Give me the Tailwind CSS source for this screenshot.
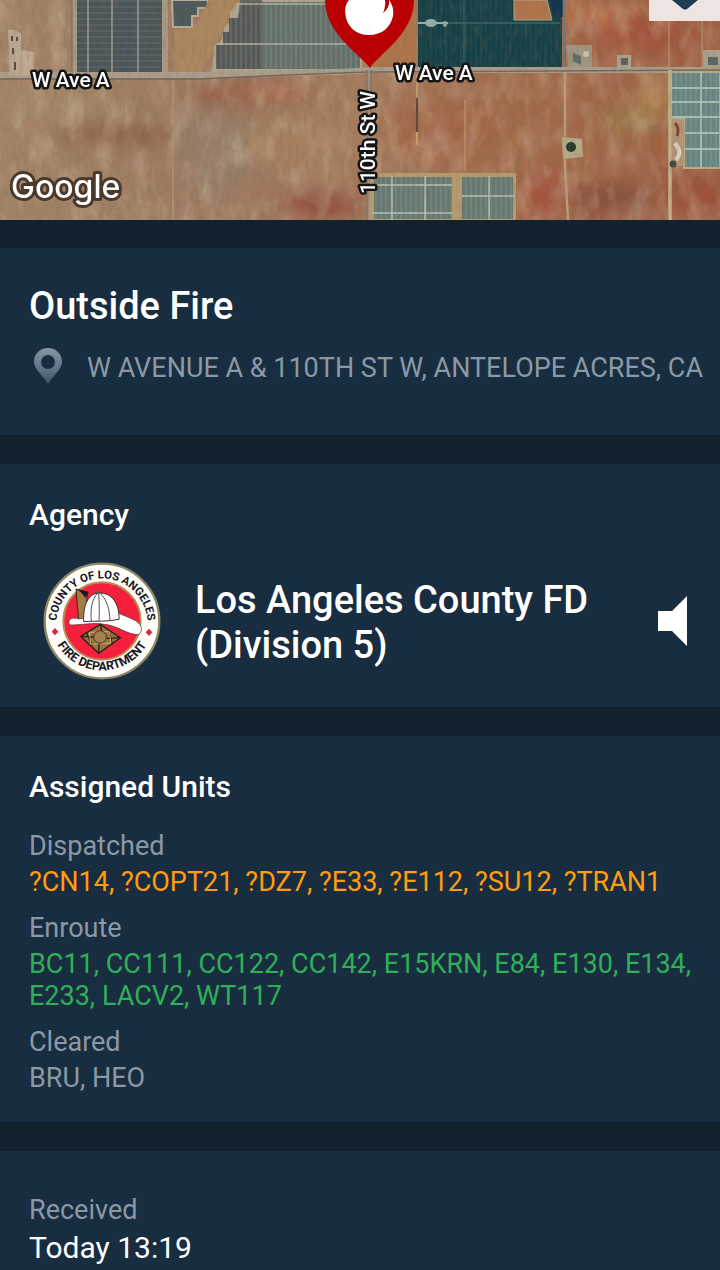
<!DOCTYPE html>
<html lang="en">
<head>
<meta charset="utf-8">
<meta name="viewport" content="width=device-width, initial-scale=1">
<title>Outside Fire</title>
<script src="https://cdn.jsdelivr.net/npm/@tailwindcss/browser@4"></script>
</head>
<body class="min-h-screen bg-[#182d3f] font-['Roboto',sans-serif] text-white">
<main class="flex flex-col">
  <div class="relative overflow-hidden">
    <svg class="block h-[220px] w-full" viewBox="0 0 720 220" preserveAspectRatio="xMidYMin slice" role="img" aria-label="Satellite map">
      <defs>
        <linearGradient id="soil" x1="0" x2="1" y1="0" y2="0">
          <stop offset="0" stop-color="#a18467"/><stop offset=".3" stop-color="#9c7a60"/>
          <stop offset=".5" stop-color="#a47a5b"/><stop offset=".7" stop-color="#a16c49"/><stop offset="1" stop-color="#9f6042"/>
        </linearGradient>
        <filter id="soft" x="-30%" y="-30%" width="160%" height="160%"><feGaussianBlur stdDeviation="9"/></filter>
        <filter id="edge"><feGaussianBlur stdDeviation=".7"/></filter>
        <filter id="light" x="0" y="0" width="100%" height="100%">
          <feTurbulence type="fractalNoise" baseFrequency=".06 .03" numOctaves="4" seed="4"/>
          <feColorMatrix values="0 0 0 0 .78  0 0 0 0 .69  0 0 0 0 .50  1.8 0 0 0 -.8"/>
        </filter>
        <filter id="dark" x="0" y="0" width="100%" height="100%">
          <feTurbulence type="fractalNoise" baseFrequency=".04 .04" numOctaves="4" seed="11"/>
          <feColorMatrix values="0 0 0 0 .46  0 0 0 0 .25  0 0 0 0 .18  0 1.8 0 0 -.75"/>
        </filter>
        <filter id="fine" x="0" y="0" width="100%" height="100%">
          <feTurbulence type="fractalNoise" baseFrequency=".25 .08" numOctaves="2" seed="7"/>
          <feColorMatrix values="0 0 0 0 .2  0 0 0 0 .14  0 0 0 0 .1  0 1.6 0 0 -.7"/>
        </filter>
        <pattern id="rowsH" width="80" height="6" patternUnits="userSpaceOnUse"><path d="M0 1H80" stroke="#8b9391" stroke-width="1" opacity=".35"/></pattern>
        <pattern id="rowsV" width="5" height="80" patternUnits="userSpaceOnUse"><path d="M1 0V80" stroke="#b4c0b0" stroke-width="1" opacity=".3"/></pattern>
      </defs>
      <rect width="720" height="220" fill="url(#soil)"/>
      <g filter="url(#soft)">
        <ellipse cx="115" cy="135" rx="60" ry="9" fill="#85533c" opacity=".8"/>
        <ellipse cx="225" cy="95" rx="35" ry="14" fill="#93543b" opacity=".65"/>
        <ellipse cx="50" cy="105" rx="60" ry="16" fill="#a58a6b" opacity=".7"/>
        <ellipse cx="215" cy="150" rx="35" ry="45" fill="#93806a" opacity=".8"/>
        <ellipse cx="275" cy="90" rx="35" ry="9" fill="#a9573c" opacity=".6"/>
        <ellipse cx="320" cy="205" rx="42" ry="13" fill="#8d4539" opacity=".8"/>
        <ellipse cx="300" cy="145" rx="55" ry="25" fill="#a8835f" opacity=".7"/>
        <ellipse cx="440" cy="130" rx="60" ry="30" fill="#a45b3d" opacity=".5"/>
        <ellipse cx="640" cy="35" rx="60" ry="18" fill="#a44c35" opacity=".8"/>
        <ellipse cx="590" cy="15" rx="40" ry="10" fill="#bd744b" opacity=".8"/>
        <ellipse cx="630" cy="120" rx="30" ry="14" fill="#998049" opacity=".7"/>
        <ellipse cx="655" cy="95" rx="14" ry="16" fill="#c09b58" opacity=".7"/>
        <ellipse cx="545" cy="195" rx="22" ry="25" fill="#a54c36" opacity=".7"/>
        <ellipse cx="610" cy="200" rx="42" ry="15" fill="#7c473c" opacity=".7"/>
        <ellipse cx="695" cy="195" rx="28" ry="20" fill="#9b4935" opacity=".7"/>
      </g>
      <rect width="720" height="220" filter="url(#light)" opacity=".4"/>
      <rect width="720" height="220" filter="url(#dark)" opacity=".5"/>
      <g filter="url(#edge)">
        <path d="M72 0H168V74H72Z" fill="#a69a84"/>
        <path d="M77 0H162V72H77Z" fill="#4c5459"/>
        <path d="M77 0H162V72H77Z" fill="url(#rowsH)"/>
        <path d="M88 0V72M112 0V72M138 0V72" stroke="#aaa897" stroke-width="1.3" fill="none"/>
        <path d="M72 0V72" stroke="#73675b"/>
        <path d="M172 0H208V8H198V16H192V27H173Z" fill="#4e5a5d" stroke="#b9ae98" stroke-width="2"/>
        <path d="M209 0H240L202 72H174V30L194 27Z" fill="#ab8760"/>
        <path d="M241 0H362V72H212L214 46L222 40L224 28L230 22V12Z" fill="#b0a58e"/>
        <path d="M243 2H360V69H216V45H223V32H229V18H238Z" fill="#64716a"/>
        <path d="M240 0H262V69H216V45H223V32H229V18H238Z" fill="#4d5050" opacity=".7"/>
        <path d="M243 2H360V69H216V45H223V32H229V18H238Z" fill="url(#rowsV)"/>
        <path d="M236 4H360M217 44H360" stroke="#aeb3a1" stroke-width="1.5" fill="none"/>
        <path d="M382 0H416V70H368Z" fill="#ad7449"/>
        <path d="M418 0H562V68H418Z" fill="#143f45"/>
        <path d="M418 0H562V68H418Z" fill="url(#rowsV)" opacity=".3"/>
        <path d="M418 23H560M464 0V67" stroke="#3d6665" stroke-width="1.3" fill="none"/>
        <path d="M418 23H448" stroke="#9ab4a9" stroke-width="2"/><ellipse cx="431" cy="23" rx="6" ry="4" fill="#91aea6"/><ellipse cx="445" cy="24" rx="2" ry="3" fill="#91aea6"/>
        <path d="M514 0H547L552 20H514Z" fill="#b1754c" stroke="#b8a58b" stroke-width="1"/>
        <path d="M550 0H563V17H554Z" fill="#16364d"/>
        <path d="M564 0V68" stroke="#777" stroke-width="2.5"/>
        <path d="M566 45H592V68H568Z" fill="#a09580"/><path d="M573 53l8 3v9l-8-4z" fill="#5f6c67"/><circle cx="586" cy="54" r="3" fill="#c7c1ac"/>
        <path d="M617 55H631V68H617Z" fill="#aaa290"/><path d="M621 58H628V65H621Z" fill="#625e54"/>
        <path d="M703 50H720V67H703Z" fill="#aaa18b"/><path d="M708 57H718V65H708Z" fill="#5c6660"/>
        <path d="M669 20V68M702 20V68" stroke="#b28863" stroke-width="1.5"/>
        <path d="M0 75H200L340 72L370 70H720" stroke="#aa9e8b" stroke-width="6" fill="none"/>
        <path d="M0 79H200Q300 74 370 72L720 70" stroke="#75685d" stroke-width="1.500" fill="none"/>
        <path d="M369 70V220" stroke="#9d9081" stroke-width="5"/><path d="M367 70V220M371 70V220" stroke="#766757" stroke-width="1"/>
        <path d="M173 80V220" stroke="#b18e6b" stroke-width="2"/><path d="M266 78V175" stroke="#9a8163" opacity=".5"/>
        <path d="M417 75V145" stroke="#c29b69" stroke-width="2"/><path d="M417 98V132" stroke="#604a39" stroke-width="2"/>
        <path d="M465 100V170" stroke="#be9160" stroke-width="1.5"/>
        <path d="M565 72V165L568 220" stroke="#bc9d78" stroke-width="2.5" fill="none"/>
        <path d="M670 70V220" stroke="#c3b08b" stroke-width="3.5"/>
        <path d="M370 173H516V220H370Z" fill="#b79b6d"/>
        <path d="M374 177H452V219H374ZM462 177H513V219H462Z" fill="#657a73"/>
        <path d="M374 177H452V219H374ZM462 177H513V219H462Z" fill="url(#rowsV)"/>
        <path d="M392 176V220M425 176V220M489 176V220M372 213H452M462 196H515M374 185H452" stroke="#b7c2ad" stroke-width="1.500" fill="none"/>
        <path d="M671 72H720V168H684V118H671Z" fill="#688683" stroke="#b8ac84" stroke-width="2"/>
        <path d="M671 72H720V168H684V118H671Z" fill="url(#rowsV)"/>
        <path d="M671 88H720M671 102H720M671 117H720M685 133H720M685 149H720M701 72V167" stroke="#a6c0b6" stroke-width="1.8" fill="none"/>
        <path d="M562 137L582 139L583 157L563 159Z" fill="#b6ab88"/><circle cx="571" cy="147" r="5" fill="#213b27"/>
        <path d="M672 119H684V166H672Z" fill="#b39576"/><path d="M675 123q5 5 2 13" stroke="#8b3e31" stroke-width="3" fill="none"/>
        <path d="M675 143q8 9 1 17" stroke="#ded5c6" stroke-width="4" fill="none"/><circle cx="673" cy="164" r="3.5" fill="#404841"/>
        <path d="M8 30Q15 28 21 34V76H10Z" fill="#baa790"/><path d="M21 50L34 52V76H21Z" fill="#c1aa94"/>
        <path d="M12 36v5M17 37v4M13 48v6M15 62v8" stroke="#554b40" stroke-width="2"/>
      </g>
      <rect width="720" height="220" filter="url(#fine)" opacity=".35"/>
      <path d="M370 68C360 54 325 34 325 0V-40H414V0C414 34 379 54 370 68Z" fill="#b90005"/>
      <path d="M349 0C344 6 345 12 346 18C349 29 358 35 369 35C382 35 391 27 393 16C394 9 392 4 389 0Z" fill="#fff"/>
      <path d="M385 0H389Q390 8 383 13Q386 6 385 0Z" fill="#b90005"/>
      <g font-family="Roboto, sans-serif" font-weight="500" font-size="21" fill="#fff" stroke="#151515" stroke-width="5" stroke-linejoin="round" paint-order="stroke">
        <text x="32" y="87">W Ave A</text>
        <text x="395" y="80">W Ave A</text>
        <text transform="translate(375 194) rotate(-90)">110th St W</text>
      </g>
      <text x="11" y="198" font-family="Inter, sans-serif" font-weight="500" font-size="32" fill="#fff" stroke="#4b392c" stroke-width="6" stroke-linejoin="round" paint-order="stroke">Google</text>
    </svg>
    <button type="button" aria-label="Map options" class="absolute top-0 right-0 flex h-[21px] w-[71px] justify-center bg-[#eee5e3]">
      <svg class="h-[10px] w-[26px]" viewBox="0 0 26 10" aria-hidden="true"><path d="M0 0H26L15 9Q13 10 11 9Z" fill="#203b52"/></svg>
    </button>
  </div>

  <div class="flex flex-col gap-[29px] bg-[#12212e] pt-7">
    <section class="bg-[#182d3f] px-[29px] pt-9 pb-[51px]">
      <h1 class="text-[38px] leading-[44px] font-medium">Outside Fire</h1>
      <div class="mt-5 flex items-end gap-[25px] text-[#8b99a6]">
        <svg class="ml-[5px] h-9 w-7 shrink-0" viewBox="0 0 28 36" aria-hidden="true">
          <defs><linearGradient id="pin" x1="0" x2="0" y1="0" y2="1"><stop offset="0" stop-color="#8795a3"/><stop offset=".5" stop-color="#65778a"/><stop offset="1" stop-color="#3d546b"/></linearGradient></defs>
          <path fill-rule="evenodd" fill="url(#pin)" d="M14 0C6 0 0 6 0 13.500C0 22 9 27 14 36C19 27 28 22 28 13.500C28 6 22 0 14 0ZM14 7a7 7 0 1 1 0 14a7 7 0 1 1 0-14Z"/>
        </svg>
        <p class="-mr-6 text-[27px] leading-8">W AVENUE A &amp; 110TH ST W, ANTELOPE ACRES, CA</p>
      </div>
    </section>

    <section class="bg-[#182d3f] px-[29px] pt-[33px] pb-[27px]">
      <h2 class="text-[30px] leading-9 font-medium">Agency</h2>
      <div class="mt-[29px] flex items-center">
        <svg class="ml-[14px] size-[118px] shrink-0" viewBox="40 35 354 354" role="img" aria-label="County of Los Angeles Fire Department">
          <defs>
            <path id="arcTop" d="M83 250A137 137 0 1 1 351 250"/>
            <path id="arcBottom" d="M64 230A155 155 0 0 0 370 230"/>
          </defs>
          <circle cx="217" cy="212" r="172" fill="#fffdf8" stroke="#8e8768" stroke-width="7"/>
          <circle cx="217" cy="212" r="116" fill="#f5203e" stroke="#b98b58" stroke-width="6"/>
          <path d="M76 233l10 11-10 11-10-11zM358 235l10 11-10 11-10-11z" fill="#d52843"/>
          <path d="M139 116L175 126L162 214L147 212Z" fill="#a27c43" stroke="#30251a" stroke-width="3"/>
          <path d="M140 116L176 125L168 143L152 124Z" fill="#1e1a18"/>
          <path d="M149 206C120 196 112 216 122 224C150 225 190 215 225 222C265 226 290 252 325 253C345 242 334 216 309 207C290 198 278 193 264 188Z" fill="#fff" stroke="#3d3030" stroke-width="2"/>
          <path d="M162 214C160 165 175 130 207 128C246 126 270 160 268 207C235 215 197 211 162 214Z" fill="#fff" stroke="#3d3030" stroke-width="3"/>
          <path d="M205 127C185 147 182 180 185 213M207 127C209 155 209 187 208 212M209 127C231 145 240 176 241 211M195 128Q206 120 218 130" fill="none" stroke="#55505a" stroke-width="3"/>
          <path d="M212 222L272 262L207 309L153 258Z" fill="#987340" stroke="#2a2118" stroke-width="4"/>
          <path d="M212 222L216 242M272 262L232 264M207 309L208 280M153 258L190 260M171 249L188 286M238 240L248 282" stroke="#2a2118" stroke-width="4"/>
          <path d="M179 246L239 244L244 278L183 282Z" fill="none" stroke="#d0ad74" stroke-width="3"/>
          <circle cx="211" cy="260" r="19" fill="#a77d49" stroke="#4c3822" stroke-width="3"/>
          <g font-family="Roboto, sans-serif" font-weight="700" fill="#17171f" text-anchor="middle">
            <text font-size="34"><textPath href="#arcTop" startOffset="50%">COUNTY OF LOS ANGELES</textPath></text>
            <text font-size="37"><textPath href="#arcBottom" startOffset="50%">FIRE DEPARTMENT</textPath></text>
          </g>
        </svg>
        <p class="ml-[34px] grow pt-1 text-[38px] leading-[45px] font-medium">Los Angeles County FD<br>(Division 5)</p>
        <button type="button" aria-label="Listen" class="mr-1 shrink-0">
          <svg class="h-[50px] w-[29px]" viewBox="0 0 29 50" aria-hidden="true"><path d="M0 15H14L29 0V50L14 35H0Z" fill="#fff"/></svg>
        </button>
      </div>
    </section>

    <section class="bg-[#182d3f] pr-5 pl-[29px] pt-[33px] pb-7">
      <h2 class="text-[30px] leading-9 font-medium">Assigned Units</h2>
      <dl class="mt-[25px] flex flex-col gap-[14px] text-[27px] leading-8 text-[#8b99a6]">
        <div class="flex flex-col gap-1"><dt>Dispatched</dt><dd class="text-[#ff9d0f]">?CN14, ?COPT21, ?DZ7, ?E33, ?E112, ?SU12, ?TRAN1</dd></div>
        <div class="flex flex-col gap-1"><dt>Enroute</dt><dd class="text-[#2fb058]">BC11, CC111, CC122, CC142, E15KRN, E84, E130, E134, E233, LACV2, WT117</dd></div>
        <div class="flex flex-col gap-1"><dt>Cleared</dt><dd>BRU, HEO</dd></div>
      </dl>
    </section>

    <section class="bg-[#182d3f] px-[29px] pt-[43px]">
      <dl class="flex flex-col gap-1">
        <dt class="text-[27px] leading-8 text-[#8b99a6]">Received</dt>
        <dd class="text-[30px] leading-9">Today 13:19</dd>
      </dl>
    </section>
  </div>
</main>
</body>
</html>
